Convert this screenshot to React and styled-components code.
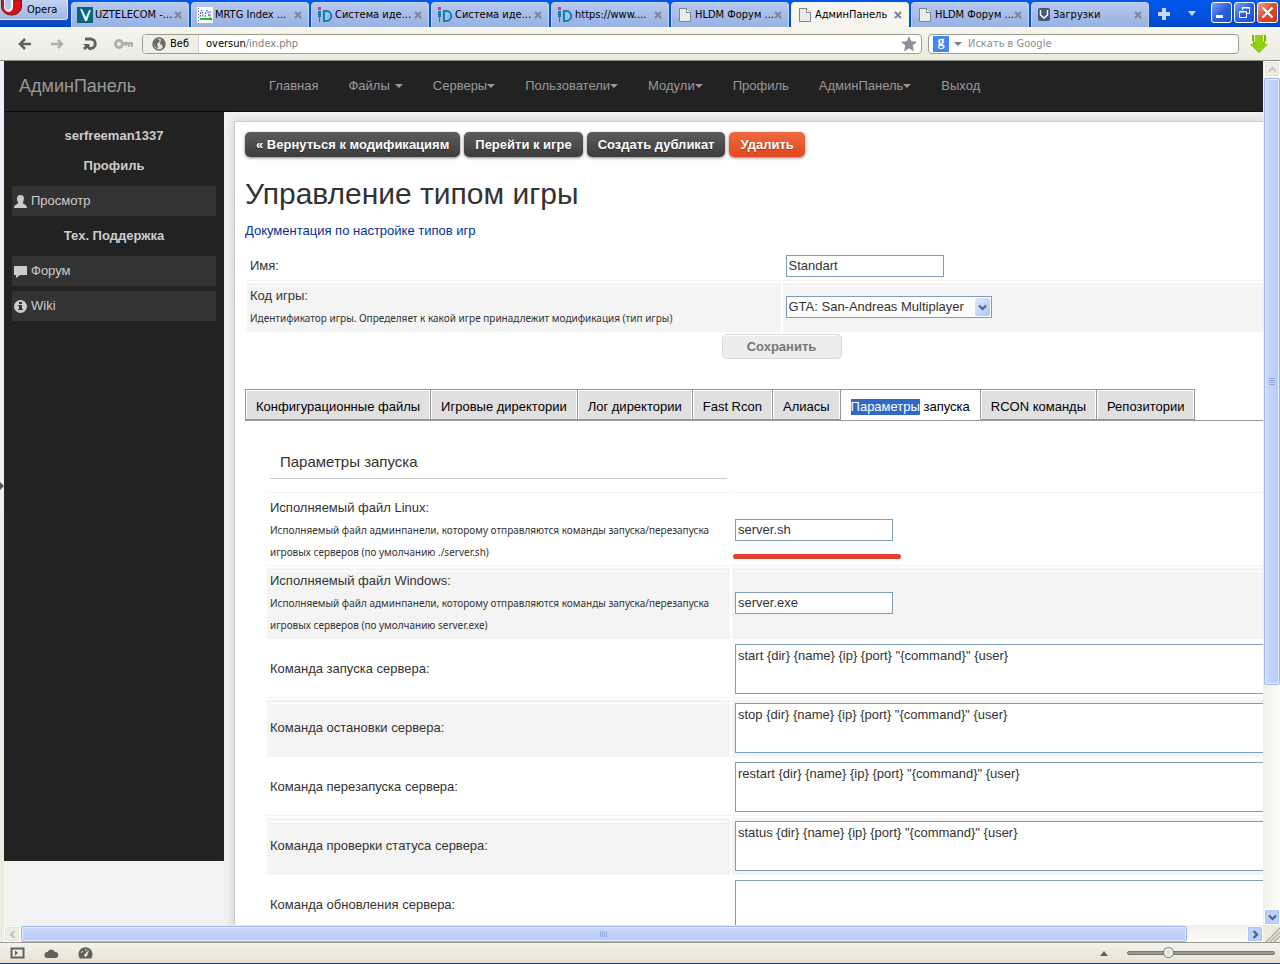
import React from 'react'
import styled, { createGlobalStyle, css } from 'styled-components'

const GlobalStyle = createGlobalStyle`
  *, *::before, *::after { box-sizing: border-box; }
  body {
    margin: 0;
    overflow: hidden;
    font: 13px/22px "Liberation Sans", Arial, sans-serif;
    color: #333;
  }
  button, input, select, textarea {
    font: inherit;
    color: inherit;
    margin: 0;
    padding: 0;
    border: 0;
    border-radius: 0;
    background: none;
    outline: none;
  }
  button { cursor: pointer; }
  a { color: inherit; text-decoration: none; }
  svg { display: block; flex: none; }
`

/* browser window */

const Window = styled.div`
  display: flex;
  flex-direction: column;
  height: 100vh;
  overflow: hidden;
  border-bottom: 1px solid #0a3c9c;
`

const chromeFont = css`
  font-family: "DejaVu Sans Condensed", "Noto Sans", sans-serif;
  font-size: 11px;
  line-height: 16px;
  color: #000;
`

const TitleBar = styled.div`
  ${chromeFont}
  display: flex;
  flex: none;
  height: 27px;
  background: linear-gradient(#0058ee, #0450dc 60%, #0046c8);
`

const OperaButton = styled.button`
  display: flex;
  align-items: center;
  gap: 5px;
  width: 69px;
  height: 21px;
  margin-right: 2px;
  background: linear-gradient(#c3d1ef, #9fb6e2);
  border: 1px solid #24459a;
  border-width: 0 1px 1px 0;
  border-radius: 0 0 4px 0;
  box-shadow: inset -1px -1px #dbe5f8;
`

const TabStrip = styled.div`
  display: flex;
  flex: 1;
  gap: 2px;
  padding-top: 2px;
  min-width: 0;
`

const BrowserTab = styled.div`
  display: flex;
  align-items: center;
  flex: 0 1 118px;
  min-width: 0;
  padding: 0 6px 0 5px;
  border-radius: 4px 4px 0 0;
  border: 1px solid ${p => p.$active ? '#f6f5ee' : '#c4d4f5'};
  border-bottom: 0;
  background: ${p => p.$active ? '#f6f5ee' : 'linear-gradient(#b5c8ef, #98b1e3)'};
`

const TabTitle = styled.button`
  display: flex;
  align-items: center;
  flex: 1;
  gap: 2px;
  min-width: 0;
  span {
    flex: 1;
    overflow: hidden;
    text-align: left;
    white-space: nowrap;
  }
`

const CloseTab = styled.button`
  color: #7d8796;
`

const TabAction = styled.button`
  display: flex;
  align-items: center;
  justify-content: center;
  width: 26px;
  padding-bottom: 2px;
`

const WindowButtons = styled.div`
  display: flex;
  gap: 2px;
  padding: 2px 2px 0 0;
`

const WindowButton = styled.button`
  display: flex;
  align-items: center;
  justify-content: center;
  width: 21px;
  height: 21px;
  border: 1px solid #fff;
  border-radius: 3px;
  background: ${p => p.$close
    ? 'linear-gradient(135deg, #f0a08a, #e0492a 50%, #c83a18)'
    : 'linear-gradient(135deg, #7ba2f2, #2c62e0 50%, #1b4fd0)'};
`

const AddressBar = styled.div`
  ${chromeFont}
  display: flex;
  align-items: center;
  flex: none;
  height: 34px;
  padding: 0 12px 0 18px;
  background: linear-gradient(#f6f5ee, #ecebe0);
  border-bottom: 1px solid #8e9085;
`

const NavButtons = styled.div`
  display: flex;
  gap: 16px;
  width: 124px;
`

const Field = styled.div`
  display: flex;
  align-items: center;
  height: 20px;
  border: 1px solid #9b9d91;
  border-radius: 4px;
  background: #fff;
  overflow: hidden;
`

const UrlField = styled(Field)`
  flex: 1;
  margin-right: 6px;
  padding-right: 4px;
  input {
    flex: 1;
    min-width: 0;
    color: #808080;
  }
`

const SiteBadge = styled.button`
  display: flex;
  align-items: center;
  gap: 4px;
  height: 18px;
  padding: 0 9px;
  margin-right: 7px;
  background: #f0efe6;
  border-right: 1px solid #d0d0c4;
`

const SearchField = styled(Field)`
  width: 311px;
  margin-right: 11px;
  padding-left: 4px;
  gap: 5px;
  input {
    flex: 1;
    min-width: 0;
    margin-left: 1px;
  }
  input::placeholder {
    color: #908f83;
    opacity: 1;
  }
`

const GoogleBadge = styled.span`
  width: 16px;
  height: 16px;
  background: #4285f4;
  color: #fff;
  font: bold 14px/12px "Liberation Serif", serif;
  text-align: center;
`

const Viewport = styled.div`
  display: flex;
  flex: 1;
  min-height: 0;
`

const PanelHandle = styled.button`
  display: flex;
  align-items: center;
  width: 4px;
  padding-bottom: 32px;
  background: linear-gradient(#eef1fa, #ecebe0);
`

const PageColumn = styled.div`
  display: flex;
  flex-direction: column;
  flex: 1;
  min-width: 0;
`

const Page = styled.div`
  flex: 1;
  min-height: 0;
  overflow: hidden;
  background: #f2f2f2;
`

const VScroll = styled.div`
  display: flex;
  flex-direction: column;
  width: 17px;
  padding-left: 1px;
  background: linear-gradient(90deg, #f0efe8, #fdfdfb);
`

const HScroll = styled.div`
  display: flex;
  flex: none;
  height: 17px;
  padding-top: 1px;
  background: linear-gradient(#f0efe8, #fdfdfb);
`

const ScrollArrow = styled.button`
  display: flex;
  align-items: center;
  justify-content: center;
  flex: none;
  width: 16px;
  height: 16px;
  border: 1px solid #fff;
  border-radius: 2px;
  color: ${p => p.disabled ? '#c4c3b8' : '#4d6185'};
  background: ${p => p.disabled ? '#efeee6' : '#bdd0fb'};
  box-shadow: inset 0 0 0 1px ${p => p.disabled ? '#e4e3d8' : '#aec3f4'};
`

const Thumb = styled.div`
  display: flex;
  align-items: center;
  justify-content: center;
  border: 1px solid #9db5e8;
  border-radius: 2px;
  box-shadow: inset 0 0 0 1px #e4ecfe;
  color: #8ea9e4;
  background: linear-gradient(${p => p.$vertical ? '90deg' : '180deg'}, #cbd9fd, #b4cbfb);
  flex: 0 0 ${p => p.$vertical ? '73%' : '95%'};
  margin: ${p => p.$vertical ? '1px 0' : '0 1px'};
`

const ScrollTrack = styled.div`
  display: flex;
  flex: 1;
  flex-direction: ${p => p.$vertical ? 'column' : 'row'};
`

const Grip = styled.div`
  display: flex;
  align-items: flex-end;
  height: 17px;
  background: #ecebdf;
`

const StatusBar = styled.div`
  display: flex;
  align-items: center;
  flex: none;
  gap: 19px;
  height: 21px;
  padding: 0 5px 0 10px;
  border-top: 1px solid #98998f;
  background: linear-gradient(#f3f2e9, #e4e3d5);
  color: #62625a;
`

const Spacer = styled.span`
  flex: 1;
`

const ZoomSlider = styled.input`
  appearance: none;
  width: 148px;
  height: 12px;
  &::-webkit-slider-runnable-track {
    height: 4px;
    border: 1px solid #77776f;
    border-radius: 2px;
    background: #9b9b92;
  }
  &::-webkit-slider-thumb {
    appearance: none;
    width: 11px;
    height: 11px;
    margin-top: -5px;
    border: 1px solid #77776f;
    border-radius: 50%;
    background: radial-gradient(#dddcd0, #fff);
  }
`

/* admin panel */

const NavBar = styled.nav`
  display: flex;
  align-items: center;
  height: 51px;
  padding-left: 15px;
  background: #222;
  border-bottom: 1px solid #080808;
  color: #999;
  a {
    display: flex;
    align-items: center;
    padding: 0 15px;
  }
`

const Brand = styled.div`
  width: 235px;
  font-size: 18px;
  line-height: 20px;
`

const Caret = styled.i`
  border: 4px solid transparent;
  border-top-color: currentColor;
  border-bottom: 0;
  margin-left: ${p => p.$spaced ? '5px' : '0'};
`

const Columns = styled.div`
  display: flex;
  align-items: flex-start;
`

const SideBar = styled.aside`
  flex: none;
  width: 220px;
  height: calc(100vh - 215px);
  padding: 9px 8px 0;
  background: #222;
  color: #ccc;
`

const SideTitle = styled.div`
  font-weight: bold;
  line-height: 30px;
  text-align: center;
`

const SideLink = styled.a`
  display: flex;
  align-items: center;
  gap: 4px;
  height: 30px;
  margin: 5px 0;
  padding-left: 2px;
  background: #333;
`

const Content = styled.main`
  flex: none;
  width: calc(100vw - 185px);
  margin: 9px 0 0 10px;
  padding: 10px;
  background: #fff;
  border: 1px solid #ccc;
  box-shadow: 0 0 10px #ccc;
`

const Actions = styled.div`
  display: flex;
  gap: 4px;
`

const ActionButton = styled.button`
  height: 25px;
  padding: 0 11px;
  border-radius: 5px;
  font-weight: bold;
  line-height: 23px;
  color: #fff;
  text-shadow: 0 1px 1px rgba(0, 0, 0, .4);
  box-shadow: 0 1px 3px rgba(0, 0, 0, .5);
  background: ${p => p.$danger
    ? 'linear-gradient(#f0693f, #e2481f)'
    : 'linear-gradient(#5c5c5c, #3c3c3c)'};
`

const Title = styled.h1`
  margin: 17px 0 6px;
  font-size: 30px;
  font-weight: normal;
  line-height: 40px;
`

const DocLink = styled.a`
  display: block;
  margin-bottom: 8px;
  color: #039;
`

const FormGrid = styled.div`
  display: grid;
  grid-template-columns: ${p => p.$narrow ? '463px 1fr' : '1fr 1fr'};
  gap: 2px;
  padding: 2px;
`

const Cell = styled.div`
  display: flex;
  flex-direction: column;
  justify-content: center;
  align-items: flex-start;
  position: relative;
  padding: 2px 3px;
  border-bottom: 1px solid #f4f4f4;
  ${p => p.$shaded && css`
    background: linear-gradient(#fff, #fff) 3px 3px / calc(100% - 6px) 1px no-repeat, #f4f4f4;
  `}
`

const Hint = styled.small`
  font-family: "Noto Sans", sans-serif;
  font-size: 10px;
  line-height: 22px;
`

const TextInput = styled.input`
  width: 158px;
  height: 22px;
  margin: 1px 0;
  padding: 0 2px;
  border: 1px solid #7f9db9;
  background: #fff;
`

const SelectBox = styled.span`
  display: flex;
  align-items: center;
  height: 22px;
  padding-right: 1px;
  border: 1px solid #7f9db9;
  background: #fff;
  select {
    appearance: none;
    width: 188px;
    padding-left: 2px;
  }
`

const SelectArrow = styled.span`
  display: flex;
  align-items: center;
  justify-content: center;
  width: 15px;
  height: 18px;
  border-radius: 2px;
  color: #4d6185;
  background: linear-gradient(135deg, #dde7fe, #b0c6fa);
`

const TextArea = styled.textarea`
  display: block;
  width: 100%;
  height: 50px;
  margin: 1px 0;
  padding: 0 2px;
  border: 1px solid #7f9db9;
  background: #fff;
  resize: none;
  overflow: hidden;
`

const Marker = styled.i`
  position: absolute;
  left: 1px;
  bottom: 6px;
  width: 168px;
  height: 5px;
  border-radius: 3px;
  background: #e63c32;
`

const SaveButton = styled.button`
  display: block;
  width: 120px;
  height: 25px;
  margin: 0 auto 30px;
  border: 1px solid #d8d8d8;
  border-radius: 5px;
  box-shadow: inset 0 1px #fff;
  background: #ededed;
  color: #777;
  font-weight: bold;
  line-height: 22px;
`

const Tabs = styled.div`
  display: flex;
  border-bottom: 1px solid #979797;
`

const Tab = styled.button`
  height: 31px;
  padding: 4px 10px 0;
  border: 1px solid #979797;
  border-left-width: ${p => p.$first ? '1px' : '0'};
  white-space: nowrap;
  color: #000;
  background: ${p => p.$active ? '#fff' : '#e0e0e0'};
  ${p => p.$active ? css`
    border-bottom-color: #fff;
  ` : css`
    box-shadow: inset 1px 1px #fff, inset -1px 0 #fff;
  `}
  mark {
    display: inline-block;
    line-height: 16px;
    background: #316ac5;
    color: #fff;
  }
`

const TabPanel = styled.section`
  padding: 20px;
`

const GroupTitle = styled.h3`
  align-self: stretch;
  margin: 0 0 11px;
  padding-left: 10px;
  border-bottom: 1px solid #ccc;
  font-size: 15px;
  font-weight: normal;
  line-height: 33px;
`

/* icons */

const Icon = ({ w = 16, h = w, children, ...rest }) =>
  <svg width={w} height={h} viewBox={`0 0 ${w} ${h}`} fill="currentColor" aria-hidden="true" {...rest}>{children}</svg>

const Cross = () => <Icon w={8}>
  <path d="M1 1l6 6M7 1L1 7" stroke="currentColor" strokeWidth="2" />
</Icon>

const Favicon = ({ kind }) => {
  if (kind === 'uz') return <Icon><path fill="#0b6580" d="M0 0h16v16H0z" /><path fill="#dff3ea" d="M3 2h2l4 8 3-7h2l-4 11H8z" /></Icon>
  if (kind === 'mrtg') return <Icon><path fill="#fff" d="M0 0h16v16H0z" /><path d="M3 10l1-6 1-1 1 7M8 10l1-5 1-2 1 2 1 5M13 4v7" fill="none" stroke="#4a4ae0" strokeDasharray="2 1" /><path fill="#19c519" d="M3 11h12v2H3z" /><path d="M1.500 1v13" stroke="#666" strokeDasharray="1 2" /><path fill="#c33" d="M13 12h2v1h-2z" /></Icon>
  if (kind === 'id') return <Icon><path fill="#e0338f" d="M1 0h3v3H1z" /><path fill="#1081ad" d="M1 4h3v6H3v5H2v-5H1z" /><path d="M7 4h2c7 0 7 10 0 10H7z" fill="none" stroke="#1081ad" strokeWidth="2" /></Icon>
  if (kind === 'down') return <Icon w={14} h={16}><rect x="1" y="1" width="12" height="13" rx="2" fill="#465778" /><path d="M3.500 3v5L7 11l3.500-3V3" fill="none" stroke="#fff" strokeWidth="1.500" /><path d="M7 1v6" stroke="#465778" strokeWidth="3" /></Icon>
  return <Icon><path d="M2.500 1.500h7l4 4v9h-11z" fill="#ecebea" stroke="#7c8594" /><path d="M9.500 1.500v4h4" fill="#fff" stroke="#7c8594" /></Icon>
}

const Chevron = ({ turn = 0 }) => <Icon w={9}>
  <path d="M1 2.500l3.500 3.500L8 2.500" fill="none" stroke="currentColor" strokeWidth="2.200" transform={`rotate(${turn} 4.500 4.500)`} />
</Icon>

const browserTabs = [
  ['uz', 'UZTELECOM -...'],
  ['mrtg', 'MRTG Index ...'],
  ['id', 'Система иде...'],
  ['id', 'Система иде...'],
  ['id', 'https://www....'],
  ['page', 'HLDM Форум ...'],
  ['page', 'АдминПанель', true],
  ['page', 'HLDM Форум ...'],
  ['down', 'Загрузки']
]

const menu = [
  ['Главная'],
  ['Файлы', true, true],
  ['Серверы', true],
  ['Пользователи', true],
  ['Модули', true],
  ['Профиль'],
  ['АдминПанель', true],
  ['Выход']
]

const commands = [
  ['start', 'Команда запуска сервера:', 'start {dir} {name} {ip} {port} "{command}" {user}'],
  ['stop', 'Команда остановки сервера:', 'stop {dir} {name} {ip} {port} "{command}" {user}'],
  ['restart', 'Команда перезапуска сервера:', 'restart {dir} {name} {ip} {port} "{command}" {user}'],
  ['status', 'Команда проверки статуса сервера:', 'status {dir} {name} {ip} {port} "{command}" {user}'],
  ['update', 'Команда обновления сервера:', '']
]

const Chrome = () => <>
  <TitleBar>
    <OperaButton>
      <Icon w={22} h={20}><path fill="#d4141a" stroke="#7d1014" d="M1.500 0v6c0 12 20 12 20 0V0z" /><path fill="#fff" d="M4 0h9v6c0 8-8 7-9 2z" /><path fill="#b7c7ea" d="M5 0h6v6c0 6-6 5-6 0z" /></Icon>
      Opera
    </OperaButton>
    <TabStrip>
      {browserTabs.map(([kind, title, active], i) => <BrowserTab key={i} $active={active}>
        <TabTitle><Favicon kind={kind} /><span>{title}</span></TabTitle>
        <CloseTab aria-label="Закрыть"><Cross /></CloseTab>
      </BrowserTab>)}
      <TabAction aria-label="Новая вкладка"><Icon w={12}><path fill="#c6d7f8" d="M4 0h4v4h4v4H8v4H4V8H0V4h4z" /></Icon></TabAction>
      <TabAction aria-label="Вкладки"><Icon w={8} h={5}><path fill="#c6d7f8" d="M0 0h8L4 5z" /></Icon></TabAction>
    </TabStrip>
    <WindowButtons>
      <WindowButton aria-label="Свернуть"><Icon w={13}><path fill="#fff" d="M1 9h7v3H1z" /></Icon></WindowButton>
      <WindowButton aria-label="Восстановить"><Icon w={13}><path fill="none" stroke="#fff" d="M4.500 4V1.500h7v6H9M1.500 5.500h7v6h-7zM4 2h8M1 6h8" /></Icon></WindowButton>
      <WindowButton $close aria-label="Закрыть окно"><Icon w={13}><path stroke="#fff" strokeWidth="2.200" d="M1.500 1.500l10 10M11.500 1.500l-10 10" /></Icon></WindowButton>
    </WindowButtons>
  </TitleBar>
  <AddressBar>
    <NavButtons>
      <button aria-label="Назад"><Icon><path d="M13 8H2M7 3L2 8l5 5" fill="none" stroke="#62625a" strokeWidth="2.500" /></Icon></button>
      <button aria-label="Вперёд"><Icon><path d="M1 8h11M8 4l4 4-4 4" fill="none" stroke="#b2b1a5" strokeWidth="2.500" /></Icon></button>
      <button aria-label="Обновить"><Icon><path d="M3 3h5.500a4.500 4.500 0 0 1 0 9.500H7" fill="none" stroke="#62625a" strokeWidth="3" /><path d="M1 8h6.500v6.500L5.200 12 3 14 1 12l2.200-2z" fill="#62625a" /></Icon></button>
      <button aria-label="Пароль"><Icon w={19} h={16}><circle cx="5" cy="8" r="3.500" fill="none" stroke="#b2b1a5" strokeWidth="3" /><path d="M8 6h11v5h-2V9h-1v2h-2V9h-1v1h-2V9H8z" fill="#b2b1a5" /></Icon></button>
    </NavButtons>
    <UrlField>
      <SiteBadge>
        <Icon w={14}><circle cx="7" cy="7" r="6" fill="#e2e1d8" stroke="#6c6c65" strokeWidth="1.500" /><path fill="#6c6c65" d="M2 3l4-1 2 2-3 3 1 3-1 2-3-4zM9 2l4 3v3l-2 3-1-3-2-1z" /></Icon>
        Веб
      </SiteBadge>
      <label htmlFor="url">oversun</label>
      <input id="url" defaultValue="/index.php" />
      <Icon><path fill="#8d8f93" d="M8 0l2.300 5.300 5.700.5-4.300 3.800L13 15.500 8 12.300 3 15.500l1.300-5.900L0 5.800l5.700-.5z" /></Icon>
    </UrlField>
    <SearchField>
      <GoogleBadge>g</GoogleBadge>
      <Icon w={8} h={4}><path fill="#7f7f78" d="M0 0h8L4 4z" /></Icon>
      <input aria-label="Поиск" placeholder="Искать в Google" />
    </SearchField>
    <button aria-label="Загрузить"><Icon w={18} h={20}><path fill="#79b800" d="M2 1h2v7h10V1h2v6h-1v3h3l-9 9-9-9h3V7H2z" /><path fill="#93d010" d="M5 1h8v9h4l-8 8-8-8h4z" /></Icon></button>
  </AddressBar>
</>

const Status = () => <StatusBar>
  <Icon w={15} h={12}><path d="M1.500 1.500h12v9h-12z" fill="#eeede3" stroke="currentColor" strokeWidth="2" /><path d="M5 3.500L8 6 5 8.500z" /></Icon>
  <Icon w={15} h={12}><path d="M3.500 11a3 3 0 0 1 0-6 4 4 0 0 1 7.500 0 3 3 0 0 1 .5 6z" /></Icon>
  <Icon w={15} h={12}><path d="M2 11.500a7 7 0 1 1 11 0z" /><path d="M3 6l2-2M7 3h2" stroke="#eeede3" /><path d="M6 8l5-5-2 6-2 1z" fill="#eeede3" /></Icon>
  <Spacer />
  <Icon w={8} h={5}><path d="M0 5l4-5 4 5z" /></Icon>
  <ZoomSlider type="range" aria-label="Масштаб" min="0" max="100" defaultValue="26" />
</StatusBar>

const LaunchOptions = () => <FormGrid $narrow>
  <Cell><GroupTitle>Параметры запуска</GroupTitle></Cell>
  <Cell />
  <Cell>
    <label htmlFor="linux">Исполняемый файл Linux:</label>
    <Hint>Исполняемый файл админпанели, которому отправляются команды запуска/перезапуска игровых серверов (по умолчанию ./server.sh)</Hint>
  </Cell>
  <Cell><TextInput id="linux" defaultValue="server.sh" /><Marker /></Cell>
  <Cell $shaded>
    <label htmlFor="windows">Исполняемый файл Windows:</label>
    <Hint>Исполняемый файл админпанели, которому отправляются команды запуска/перезапуска игровых серверов (по умолчанию server.exe)</Hint>
  </Cell>
  <Cell $shaded><TextInput id="windows" defaultValue="server.exe" /></Cell>
  {commands.map(([id, label, value], i) => <React.Fragment key={id}>
    <Cell $shaded={i % 2 === 1}><label htmlFor={id}>{label}</label></Cell>
    <Cell $shaded={i % 2 === 1}><TextArea id={id} defaultValue={value} /></Cell>
  </React.Fragment>)}
</FormGrid>

const AdminPanel = () => <Page>
  <NavBar>
    <Brand>АдминПанель</Brand>
    {menu.map(([title, dropdown, spaced]) => <a href="#" key={title}>
      {title}{dropdown && <Caret $spaced={spaced} />}
    </a>)}
  </NavBar>
  <Columns>
    <SideBar>
      <SideTitle>serfreeman1337</SideTitle>
      <SideTitle>Профиль</SideTitle>
      <SideLink href="#">
        <Icon w={13}><path d="M6.500 0c3.500 0 4 3 3 6-.5 1.500-1 2 0 2.700C11 9.700 13 10 13 13H0c0-3 2-3.300 3.500-4.300 1-.7.5-1.200 0-2.700-1-3-.5-6 3-6z" /></Icon>
        Просмотр
      </SideLink>
      <SideTitle>Тех. Поддержка</SideTitle>
      <SideLink href="#">
        <Icon w={13}><path d="M0 1h13v9H6l-4 3v-3H0z" /></Icon>
        Форум
      </SideLink>
      <SideLink href="#">
        <Icon w={13}><circle cx="6.500" cy="6.500" r="6.500" /><path fill="#333" d="M5 2h3v2H5zM4 5h4v4h1v1H4V9h1V6H4z" /></Icon>
        Wiki
      </SideLink>
    </SideBar>
    <Content>
      <Actions>
        <ActionButton>« Вернуться к модификациям</ActionButton>
        <ActionButton>Перейти к игре</ActionButton>
        <ActionButton>Создать дубликат</ActionButton>
        <ActionButton $danger>Удалить</ActionButton>
      </Actions>
      <Title>Управление типом игры</Title>
      <DocLink href="#">Документация по настройке типов игр</DocLink>
      <FormGrid>
        <Cell><label htmlFor="name">Имя:</label></Cell>
        <Cell><TextInput id="name" defaultValue="Standart" /></Cell>
        <Cell $shaded>
          <label htmlFor="game">Код игры:</label>
          <Hint>Идентификатор игры. Определяет к какой игре принадлежит модификация (тип игры)</Hint>
        </Cell>
        <Cell $shaded>
          <SelectBox>
            <select id="game"><option>GTA: San-Andreas Multiplayer</option></select>
            <SelectArrow><Chevron /></SelectArrow>
          </SelectBox>
        </Cell>
      </FormGrid>
      <SaveButton>Сохранить</SaveButton>
      <Tabs>
        <Tab $first>Конфигурационные файлы</Tab>
        <Tab>Игровые директории</Tab>
        <Tab>Лог директории</Tab>
        <Tab>Fast Rcon</Tab>
        <Tab>Алиасы</Tab>
        <Tab $active><mark>Параметры</mark> запуска</Tab>
        <Tab>RCON команды</Tab>
        <Tab>Репозитории</Tab>
      </Tabs>
      <TabPanel><LaunchOptions /></TabPanel>
    </Content>
  </Columns>
</Page>

const App = () => <Window>
  <GlobalStyle />
  <Chrome />
  <Viewport>
    <PanelHandle aria-label="Панель"><Icon w={4} h={8}><path fill="#555" d="M0 0l4 4-4 4z" /></Icon></PanelHandle>
    <PageColumn>
      <AdminPanel />
      <HScroll>
        <ScrollArrow disabled aria-label="Влево"><Chevron turn={90} /></ScrollArrow>
        <ScrollTrack>
          <Thumb><Icon w={8} h={6}><path d="M0 0h1v6H0zM2 0h1v6H2zM4 0h1v6H4zM6 0h1v6H6z" /></Icon></Thumb>
        </ScrollTrack>
        <ScrollArrow aria-label="Вправо"><Chevron turn={-90} /></ScrollArrow>
      </HScroll>
    </PageColumn>
    <VScroll>
      <ScrollArrow disabled aria-label="Вверх"><Chevron turn={180} /></ScrollArrow>
      <ScrollTrack $vertical>
        <Thumb $vertical><Icon w={6} h={8}><path d="M0 0h6v1H0zM0 2h6v1H0zM0 4h6v1H0zM0 6h6v1H0z" /></Icon></Thumb>
      </ScrollTrack>
      <ScrollArrow aria-label="Вниз"><Chevron /></ScrollArrow>
      <Grip><Icon><path d="M2 16L16 2M6 16L16 6M10 16l6-6" stroke="#b0af9f" strokeWidth="1.500" /></Icon></Grip>
    </VScroll>
  </Viewport>
  <Status />
</Window>

export default App
